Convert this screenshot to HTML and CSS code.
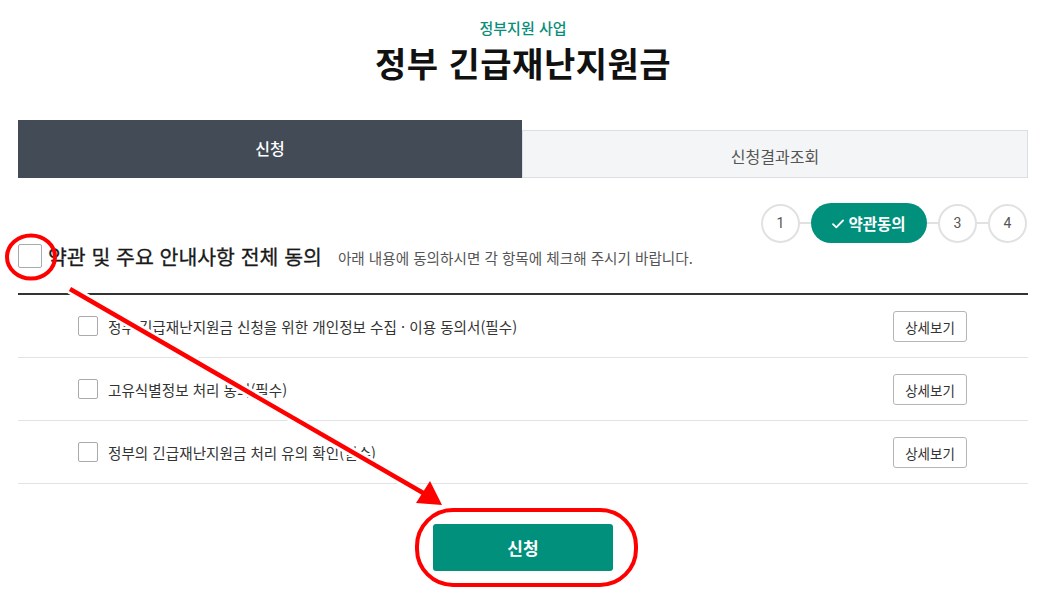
FILE: index.html
```html
<!DOCTYPE html>
<html lang="ko">
<head>
<meta charset="utf-8">
<title>정부 긴급재난지원금</title>
<link rel="stylesheet" href="styles.css">
</head>
<body>
<div class="page">
  <header class="header">
    <p class="subtitle">정부지원 사업</p>
    <h1 class="title">정부 긴급재난지원금</h1>
  </header>

  <nav class="tabs">
    <div class="tab tab-active">신청</div>
    <div class="tab tab-idle">신청결과조회</div>
  </nav>

  <div class="steps">
    <span class="step-circle">1</span>
    <span class="step-line"></span>
    <span class="step-pill"><svg class="check" viewBox="0 0 12 10" width="12" height="10"><path d="M1 5.2 L4.3 8.3 L11 1.5" fill="none" stroke="#fff" stroke-width="1.8" stroke-linecap="round" stroke-linejoin="round"/></svg>약관동의</span>
    <span class="step-line"></span>
    <span class="step-circle">3</span>
    <span class="step-line"></span>
    <span class="step-circle">4</span>
  </div>

  <div class="all-row">
    <span class="box box-lg"></span>
    <span class="all-label">약관 및 주요 안내사항 전체 동의</span>
    <span class="all-hint">아래 내용에 동의하시면 각 항목에 체크해 주시기 바랍니다.</span>
  </div>

  <ul class="terms">
    <li class="term">
      <span class="box"></span>
      <span class="term-text">정부 긴급재난지원금 신청을 위한 개인정보 수집 · 이용 동의서(필수)</span>
      <button class="detail">상세보기</button>
    </li>
    <li class="term">
      <span class="box"></span>
      <span class="term-text">고유식별정보 처리 동의(필수)</span>
      <button class="detail">상세보기</button>
    </li>
    <li class="term">
      <span class="box"></span>
      <span class="term-text">정부의 긴급재난지원금 처리 유의 확인(필수)</span>
      <button class="detail">상세보기</button>
    </li>
  </ul>

  <div class="actions">
    <button class="submit">신청</button>
  </div>
</div>

<svg class="annot" width="1050" height="595" viewBox="0 0 1050 595">
  <ellipse cx="31" cy="257" rx="24" ry="21.5" fill="none" stroke="#ff0000" stroke-width="4"/>
  <line x1="70" y1="289" x2="425" y2="494" stroke="#ffffff" stroke-width="10"/>
  <line x1="70" y1="289" x2="425" y2="494" stroke="#ff0000" stroke-width="4.5"/>
  <polygon points="442,505 416,503 430,481" fill="#ff0000"/>
  <rect x="417" y="510" width="219" height="75" rx="36" ry="36" fill="none" stroke="#ff0000" stroke-width="4"/>
</svg>
</body>
</html>
```

FILE: styles.css
```css
* {
  box-sizing: border-box;
}

html, body {
  margin: 0;
  padding: 0;
  background: #ffffff;
}

body {
  width: 1050px;
  height: 595px;
  overflow: hidden;
  position: relative;
  font-family: "Noto Sans CJK KR", "Noto Sans", sans-serif;
  color: #222;
}

.page {
  padding: 0 22px 0 18px;
}

.header {
  padding-top: 18px;
  text-align: center;
}

.subtitle {
  margin: 0;
  font-size: 15px;
  line-height: 20px;
  color: #0b8e79;
  font-weight: 500;
}

.title {
  margin: 3px 0 0;
  font-size: 34px;
  line-height: 44px;
  font-weight: 700;
  color: #111;
  letter-spacing: 0.5px;
}

.tabs {
  margin-top: 35px;
  display: flex;
  align-items: flex-end;
}

.tab {
  flex: 1;
  display: flex;
  align-items: center;
  justify-content: center;
  font-size: 16px;
}

.tab-active {
  height: 58px;
  background: #434b57;
  color: #ffffff;
  font-weight: 500;
  padding-bottom: 2px;
}

.tab-idle {
  height: 48px;
  background: #f4f5f7;
  border: 1px solid #dcdee2;
  color: #555;
  padding-top: 4px;
}

.steps {
  margin-top: 25px;
  display: flex;
  justify-content: flex-end;
  align-items: center;
  padding-right: 1px;
}

.step-circle {
  width: 39px;
  height: 39px;
  border: 2px solid #e1e1e1;
  border-radius: 50%;
  display: flex;
  align-items: center;
  justify-content: center;
  font-size: 14px;
  color: #555;
  font-family: "Roboto", "Noto Sans", sans-serif;
}

.step-line {
  width: 11px;
  height: 2px;
  background: #e1e1e1;
}

.step-pill {
  width: 116px;
  height: 40px;
  border-radius: 20px;
  background: #00907c;
  color: #ffffff;
  display: flex;
  align-items: center;
  justify-content: center;
  gap: 4px;
  font-size: 15.5px;
  font-weight: 700;
}

.check {
  display: block;
  margin-top: 1px;
}

.all-row {
  display: flex;
  align-items: center;
  padding: 0 0 25px;
  border-bottom: 2px solid #333;
  height: 52px;
}

.box {
  width: 20px;
  height: 20px;
  border: 1px solid #aaa;
  border-radius: 2px;
  background: #fff;
  flex: none;
}

.box-lg {
  width: 24px;
  height: 24px;
}

.all-label {
  margin-left: 6px;
  font-size: 20.5px;
  font-weight: 400;
  color: #1a1a1a;
  line-height: 26px;
  -webkit-text-stroke: 0.3px #1a1a1a;
}

.all-hint {
  margin-left: 16px;
  margin-top: 3px;
  font-size: 14.6px;
  color: #555;
}

.terms {
  list-style: none;
  margin: 0;
  padding: 0;
}

.term {
  height: 63px;
  display: flex;
  align-items: center;
  padding: 0 61px 0 60px;
  border-bottom: 1px solid #e3e3e3;
}

.term-text {
  margin-left: 10px;
  font-size: 14.6px;
  color: #333;
  flex: 1;
}

.detail {
  width: 74px;
  height: 31px;
  border: 1px solid #b5b5b5;
  border-radius: 3px;
  background: #fff;
  font-family: "Noto Sans CJK KR", "Noto Sans", sans-serif;
  font-size: 13.5px;
  color: #333;
  padding: 0;
  margin-top: 1px;
}

.actions {
  display: flex;
  justify-content: center;
  margin-top: 40px;
}

.submit {
  width: 180px;
  height: 47px;
  border: none;
  border-radius: 3px;
  background: #00907c;
  color: #ffffff;
  font-family: "Noto Sans CJK KR", "Noto Sans", sans-serif;
  font-size: 17px;
  font-weight: 700;
}

.annot {
  position: absolute;
  left: 0;
  top: 0;
  pointer-events: none;
}
```
